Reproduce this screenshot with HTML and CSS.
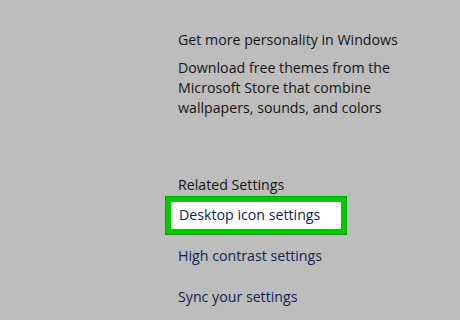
FILE: index.html
```html
<!doctype html>
<html>
<head>
    <meta charset="utf-8">
    <title>Themes</title>
<link rel="stylesheet" href="styles.css">
</head>
<body>

<div class="page">
    <div class="side">
        <h3 class="title">Get more personality in Windows</h3>
        <p class="desc">Download free themes from the Microsoft Store that combine wallpapers, sounds, and colors</p>

        <h3 class="title related">Related Settings</h3>
        <ul class="links">
            <li class="hl"><a href="#">Desktop icon settings</a></li>
            <li><a href="#">High contrast settings</a></li>
            <li><a href="#">Sync your settings</a></li>
        </ul>
    </div>
</div>

</body>
</html>
```

FILE: styles.css
```css
*{margin: 0; padding: 0; box-sizing: border-box;}
html,body{width: 100%; height: 100%; overflow: hidden;}
body{background-color: #bdbdbd; font-family: "Open Sans", "Noto Sans", sans-serif; color: #141414;}
.page{display: flex; padding: 30px 0 0 178px;}
.side{width: 240px;}
.title{font-size: 14.2px; font-weight: normal; line-height: 20px;}
.desc{font-size: 14.2px; line-height: 20px; margin-top: 8px;}
.related{margin-top: 57px;}
.links{list-style: none; margin-top: 2px;}
.links li{height: 41px; line-height: 20px;}
.links a{color: #0f2350; text-decoration: none; font-size: 14.2px;}
.links .hl{margin-left: -12px; width: 180px; height: 37px; padding: 2px 0 0 8px; border: 5px solid #00cc00; outline: 1px solid #0a9a0a; background: #fff; margin-bottom: 11px;}
```
